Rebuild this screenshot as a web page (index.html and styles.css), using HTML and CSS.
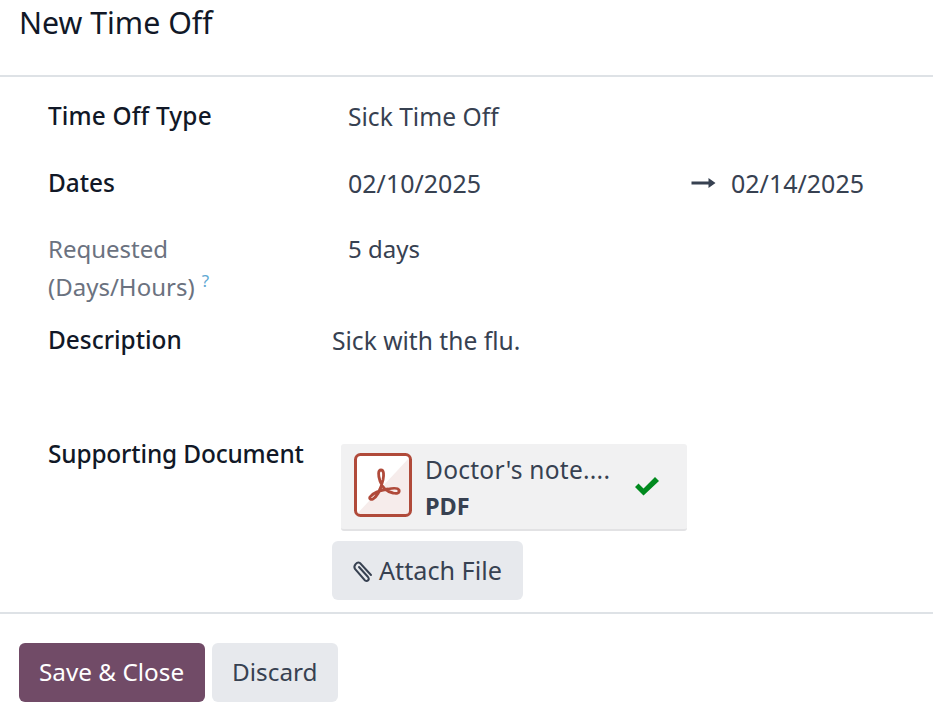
FILE: index.html
```html
<!DOCTYPE html>
<html lang="en">
<head>
<meta charset="utf-8">
<title>New Time Off</title>
<link rel="stylesheet" href="styles.css">
</head>
<body>
<div class="dialog">
  <header class="head"><h1 class="title">New Time Off</h1></header>
  <main class="body">
    <div class="row row-type">
      <div class="label strong label-type">Time Off Type</div>
      <div class="value value-wide">Sick Time Off</div>
    </div>
    <div class="row row-dates">
      <div class="label strong">Dates</div>
      <div class="value dates">
        <span class="date-from">02/10/2025</span>
        <svg class="arrow" viewBox="0 0 24 10" width="25" height="10" aria-hidden="true"><path d="M0 3.500h17V0l7 5-7 5V6.500H0z" fill="#374151"/></svg>
        <span>02/14/2025</span>
      </div>
    </div>
    <div class="row row-req">
      <div class="label muted">Requested<br>(Days/Hours) <sup class="help">?</sup></div>
      <div class="value value-plain">5 days</div>
    </div>
    <div class="row row-desc">
      <div class="label strong">Description</div>
      <div class="value value-wide desc">Sick with the flu.</div>
    </div>
    <div class="row row-doc">
      <div class="label strong label-doc">Supporting Document</div>
      <div class="doc-col">
        <div class="attachment">
          <svg class="pdf" viewBox="0 0 58 64" width="58" height="64" aria-hidden="true">
            <rect x="1.500" y="1.500" width="55" height="61" rx="5" fill="#fff"/>
            <path d="M3 61 55 5v53a3 3 0 0 1-3 3z" fill="#f6eceb"/>
            <rect x="1.500" y="1.500" width="55" height="61" rx="5" fill="none" stroke="#b04a3a" stroke-width="3"/>
            <path d="M27 17c-3 0-3 5-1 11 2 6 7 11 13 12 4 1 7 0 6-3-1-2-6-2-11-1-7 1-15 4-18 8-1 2 1 3 3 2 4-2 8-11 10-19 1-5 1-10-2-10z" fill="none" stroke="#b04a3a" stroke-width="2.800"/>
          </svg>
          <div class="file">
            <div class="file-name">Doctor's note....</div>
            <div class="file-ext">PDF</div>
          </div>
          <svg class="check" viewBox="0 0 24 20" width="24" height="20" aria-hidden="true"><path d="M0 11l3.500-3.500 5 5L20 1l4 4L8.500 19.500z" fill="#008a1e"/></svg>
        </div>
        <button class="btn btn-light attach" type="button">
          <svg class="clip" viewBox="0 0 22 24" width="22" height="24" aria-hidden="true"><path d="M7 8l9 10c2 2.500-.5 5-3 3.500L3 10C1 7 5 2 8 4l11 12" fill="none" stroke="#374151" stroke-width="2" stroke-linecap="round"/></svg>
          <span class="attach-text">Attach File</span>
        </button>
      </div>
    </div>
  </main>
  <footer class="foot">
    <button class="btn btn-primary foot-btn" type="button">Save &amp; Close</button>
    <button class="btn btn-light foot-btn foot-discard" type="button">Discard</button>
  </footer>
</div>
</body>
</html>
```
FILE: styles.css
```css
* { box-sizing: border-box; }
html, body { margin: 0; padding: 0; background: #fff; }
body {
  font-family: "Noto Sans", "Open Sans", sans-serif;
  font-size: 24px;
  line-height: 38px;
  color: #374151;
}
.dialog { width: 933px; height: 722px; overflow: hidden; display: flex; flex-direction: column; }
.head { height: 77px; border-bottom: 2px solid #dee2e6; padding: 0 19px; }
.title { margin: 0; font-size: 30.300px; font-weight: 400; color: #111827; line-height: 46px; }
.body { height: 537px; border-bottom: 2px solid #dee2e6; padding: 19px 48px 0; }
.row { display: grid; grid-template-columns: 300px 1fr; }
.label { color: #111827; }
.strong { font-weight: 500; font-size: 24.400px; padding-top: 1px; }
.label-type { letter-spacing: .15px; }
.label-doc { letter-spacing: -.15px; padding-top: 0; }
.muted { color: #6b7280; }
.help { font-size: 17px; color: #5fa8d3; line-height: 0; vertical-align: 9px; margin-left: 1px; }
.value { padding-top: 2px; }
.value-wide { font-size: 24.600px; }
.value-plain { padding-top: 0; }
.row-type { height: 67px; }
.row-dates { height: 67px; }
.row-req { height: 90px; }
.row-desc { height: 115px; }
.desc { margin-left: -16px; }
.dates { display: flex; align-items: center; align-self: start; font-size: 25px; padding-top: 1px; }
.date-from { width: 343px; }
.arrow { margin-right: 15px; }
.doc-col { margin-left: -16px; padding-top: 9px; }
.attachment {
  margin-left: 9px;
  width: 346px;
  height: 87px;
  background: #f1f1f2;
  border-radius: 3px;
  border-bottom: 2px solid #e2e2e4;
  display: flex;
  align-items: center;
  padding: 0 0 4px 13px;
}
.pdf { flex: none; }
.file { width: 210px; margin: 6px 0 0 13px; line-height: 37px; }
.file-name { font-size: 24.500px; letter-spacing: .25px; }
.file-ext { font-weight: 700; font-size: 23.500px; }
.check { flex: none; margin-top: 3px; }
.btn {
  font-family: inherit;
  font-size: 24.300px;
  line-height: 38px;
  height: 59px;
  border: 0;
  border-radius: 6px;
  padding: 0 21px 0 20px;
  color: #374151;
}
.btn-light { background: #e7e9ed; }
.btn-primary { background: #714b67; color: #fff; }
.attach { display: flex; align-items: center; gap: 5px; margin-top: 10px; font-size: 25.200px; }
.attach-text { margin-top: -2px; }
.foot { display: flex; gap: 7px; padding: 29px 19px 0; }
.foot-btn { padding-bottom: 2px; }
.foot-discard { padding-right: 20px; }
```
